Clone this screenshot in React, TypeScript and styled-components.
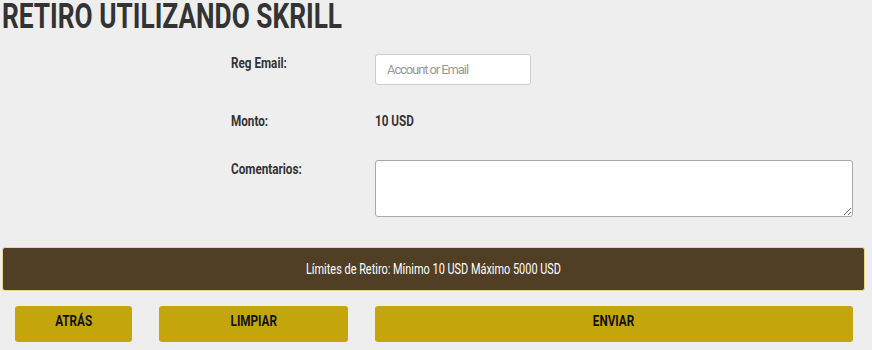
import React from "react";
import styled, { createGlobalStyle } from "styled-components";

const GlobalStyle = createGlobalStyle`
  html, body {
    margin: 0;
    padding: 0;
    background: #eeeeee;
  }
  body {
    font-family: Roboto, "Liberation Sans", sans-serif;
    color: #333333;
  }
`;

// the original face is a narrow display font; squeeze Roboto to its width
const Narrow = styled.span<{ $scale?: number; $origin?: string }>`
  display: inline-block;
  white-space: nowrap;
  transform: scaleX(${(p) => p.$scale ?? 0.78});
  transform-origin: ${(p) => p.$origin ?? "left"} center;
`;

const Page = styled.div`
  width: 872px;
  height: 350px;
  overflow: hidden;
`;

const Title = styled.h1`
  margin: -4px 0 0;
  padding: 0 0 0 2px;
  font-size: 35px;
  line-height: 41px;
  font-weight: 700;
  color: #333333;
  text-transform: uppercase;
`;

const FormGrid = styled.div`
  display: grid;
  grid-template-columns: 144px 1fr;
  padding: 17px 19px 0 231px;
`;

const Label = styled.div`
  font-size: 15px;
  line-height: 18px;
  font-weight: 700;
  color: #333333;
`;

const Field = styled.div<{ $height: number }>`
  height: ${(p) => p.$height}px;
`;

const TextInput = styled.input`
  box-sizing: border-box;
  display: block;
  width: 156px;
  height: 31px;
  padding: 0 11px;
  border: 1px solid #cccccc;
  border-radius: 3px;
  background: #ffffff;
  font-family: inherit;
  font-size: 13px;
  letter-spacing: -1.1px;
  color: #333333;
  outline: none;

  &::placeholder {
    color: #999999;
  }
`;

const Value = styled.div`
  font-size: 15px;
  line-height: 18px;
  font-weight: 700;
  color: #333333;
`;

const TextArea = styled.textarea`
  display: block;
  box-sizing: border-box;
  width: 100%;
  height: 57px;
  border: 1px solid #a9a9a9;
  border-radius: 3px;
  background: #ffffff;
  font-family: inherit;
  outline: none;
`;

const Banner = styled.div`
  box-sizing: border-box;
  margin: 30px 7px 0 2px;
  height: 44px;
  display: flex;
  align-items: center;
  justify-content: center;
  background: #513f25;
  border: 1px solid #e6d98f;
  border-radius: 3px;
  color: #ffffff;
  font-size: 14px;
`;

const ButtonRow = styled.div`
  display: grid;
  grid-template-columns: 117px 189px 1fr;
  column-gap: 27px;
  padding: 15px 19px 0 15px;
`;

const ActionButton = styled.button`
  height: 36px;
  padding: 0 0 7px;
  border: none;
  border-radius: 3px;
  background: #c5a50c;
  color: #111111;
  font-family: inherit;
  font-size: 15px;
  font-weight: 700;
  cursor: pointer;
`;

export default function App() {
  return (
    <Page>
      <GlobalStyle />
      <Title>
        <Narrow $scale={0.75}>Retiro utilizando Skrill</Narrow>
      </Title>
      <FormGrid>
        <Label>
          <Narrow>Reg Email:</Narrow>
        </Label>
        <Field $height={58}>
          <TextInput placeholder="Account or Email" />
        </Field>
        <Label>
          <Narrow>Monto:</Narrow>
        </Label>
        <Field $height={48}>
          <Value>
            <Narrow>10 USD</Narrow>
          </Value>
        </Field>
        <Label>
          <Narrow>Comentarios:</Narrow>
        </Label>
        <Field $height={57}>
          <TextArea />
        </Field>
      </FormGrid>
      <Banner>
        <Narrow $origin="center">
          Límites de Retiro: Mínimo 10 USD Máximo 5000 USD
        </Narrow>
      </Banner>
      <ButtonRow>
        <ActionButton>
          <Narrow $origin="center">ATRÁS</Narrow>
        </ActionButton>
        <ActionButton>
          <Narrow $origin="center">LIMPIAR</Narrow>
        </ActionButton>
        <ActionButton>
          <Narrow $origin="center">ENVIAR</Narrow>
        </ActionButton>
      </ButtonRow>
    </Page>
  );
}
